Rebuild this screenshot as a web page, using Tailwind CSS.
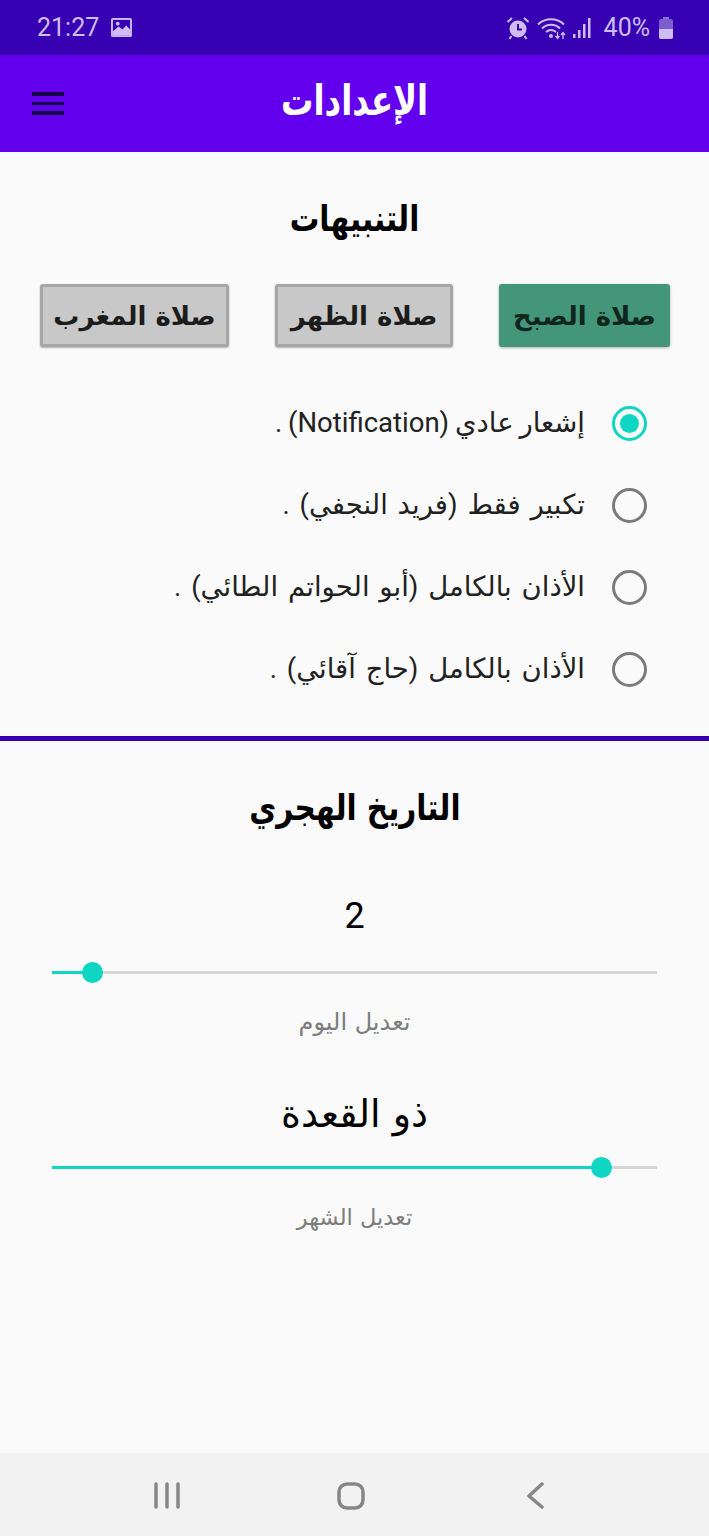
<!DOCTYPE html>
<html lang="ar">
<head>
<meta charset="utf-8">
<script src="https://cdn.jsdelivr.net/npm/@tailwindcss/browser@4"></script>
<title>الإعدادات</title>
</head>
<body class="m-0 bg-[#fafafa]">
<div class="w-[709px] h-[1536px] flex flex-col overflow-hidden bg-[#fafafa] font-['DejaVu_Sans',sans-serif]">

  <!-- Status bar -->
  <div class="h-[55px] shrink-0 bg-[#3700b3] flex items-center justify-between pl-[37px] pr-[36px] text-[#cdbdf0]">
    <div class="flex items-center gap-[12px]">
      <span class="font-['Roboto',sans-serif] text-[25px] leading-none">21:27</span>
      <svg width="21" height="20" viewBox="0 0 22 21"><rect width="22" height="20" y="0" rx="2" fill="#cdbdf0"/><rect x="2" y="2" width="18" height="16" fill="#3700b3"/><path d="M2 18 L2 14 L8 9 L12 12 L16 8 L20 12 L20 18 Z" fill="#cdbdf0"/><circle cx="7" cy="6" r="2" fill="#cdbdf0"/></svg>
    </div>
    <div class="flex items-center">
      <svg width="24" height="24" viewBox="0 0 24 24" fill="none" class="mr-[7px]"><circle cx="12" cy="13" r="8.5" fill="#cdbdf0"/><path d="M12 8v5.5h4" stroke="#3700b3" stroke-width="2"/><path d="M1.500 6 L6 2 M22.500 6 L18 2 M5.500 20 L3.500 23 M18.500 20 L20.500 23" stroke="#cdbdf0" stroke-width="2"/></svg>
      <svg width="30" height="24" viewBox="0 0 30 24" fill="none" class="mr-[5px]"><path d="M1 8.500 C8 1.500 20 1.500 27 8.500 M5 12.500 C10 7.500 18 7.500 23 12.500 M9 16 C12 13.500 16 13.500 19 16" stroke="#cdbdf0" stroke-width="2"/><circle cx="14" cy="20" r="2" fill="#cdbdf0"/><path d="M20.500 16v6M18.500 20l2 2.500 2-2.500M26 23v-6M24 19l2-2.500 2 2.500" stroke="#cdbdf0" stroke-width="1.300"/></svg>
      <svg width="20" height="22" viewBox="0 0 20 22" class="mr-[12px]"><rect x="1" y="17" width="2.500" height="4" fill="#cdbdf0"/><rect x="6" y="13" width="2.500" height="8" fill="#cdbdf0"/><rect x="11" y="7" width="2.500" height="14" fill="#cdbdf0"/><rect x="16" y="1" width="2.500" height="20" fill="#cdbdf0"/></svg>
      <span class="font-['Roboto',sans-serif] text-[25px] leading-none mr-[9px]">40%</span>
      <svg width="14" height="22" viewBox="0 0 14 22"><rect x="4" y="0" width="6" height="3" fill="#8a6fd8"/><rect x="0" y="2" width="14" height="20" rx="2" fill="#7c5ed0"/><path d="M0 12h14v8a2 2 0 0 1-2 2H2a2 2 0 0 1-2-2z" fill="#cdbdf0"/></svg>
    </div>
  </div>

  <!-- App bar -->
  <header class="relative h-[97px] shrink-0 bg-[#6200ee] flex items-center justify-center pb-[6px]">
    <h1 dir="rtl" class="m-0 text-white text-[42px] leading-none font-bold scale-x-[0.77]">الإعدادات</h1>
    <div class="absolute left-[32px] top-[37px] w-[32px] flex flex-col gap-[6px]">
      <span class="block h-[3.5px] bg-[#16004a]"></span>
      <span class="block h-[3.5px] bg-[#16004a]"></span>
      <span class="block h-[3.5px] bg-[#16004a]"></span>
    </div>
  </header>

  <main class="flex-1 flex flex-col min-h-0">
    <!-- Alerts section -->
    <section dir="rtl" class="h-[584px] shrink-0 flex flex-col items-stretch">
      <h2 class="m-0 mt-[46px] h-[42px] text-center text-[36px] leading-[42px] font-bold text-black scale-x-[0.82]">التنبيهات</h2>

      <div class="mt-[44px] flex justify-between pr-[39px] pl-[40px]">
        <button class="w-[171px] h-[63px] rounded-[3px] bg-[#43967a] shadow-[0_1px_3px_rgba(0,0,0,0.3)] text-[#10251d] text-[26px] font-bold leading-none">صلاة الصبح</button>
        <button class="w-[178px] h-[63px] rounded-[3px] border-[3px] border-[#a6a6a6] bg-[#c8c8c8] shadow-[0_1px_2px_rgba(0,0,0,0.3)] text-[#1c1c1c] text-[26px] font-bold leading-none">صلاة الظهر</button>
        <button class="w-[189px] h-[63px] rounded-[3px] border-[3px] border-[#a6a6a6] bg-[#c8c8c8] shadow-[0_1px_2px_rgba(0,0,0,0.3)] text-[#1c1c1c] text-[26px] font-bold leading-none">صلاة المغرب</button>
      </div>

      <div class="mt-[35px] flex flex-col pr-[62px] text-[#212121] text-[27.5px] font-['Roboto','DejaVu_Sans',sans-serif]">
        <label class="h-[82px] flex items-center gap-[27px]">
          <span class="w-[35px] h-[35px] shrink-0 rounded-full border-[3.5px] border-[#0fd6c2] flex items-center justify-center"><span class="w-[19px] h-[19px] rounded-full bg-[#0fd6c2]"></span></span>
          <span class="[word-spacing:-1px]">إشعار عادي (Notification) .</span>
        </label>
        <label class="h-[82px] flex items-center gap-[27px]">
          <span class="w-[35px] h-[35px] shrink-0 rounded-full border-[3.5px] border-[#7b7b7b]"></span>
          <span class="[word-spacing:3px]">تكبير فقط (فريد النجفي) .</span>
        </label>
        <label class="h-[82px] flex items-center gap-[27px]">
          <span class="w-[35px] h-[35px] shrink-0 rounded-full border-[3.5px] border-[#7b7b7b]"></span>
          <span class="[word-spacing:3px]">الأذان بالكامل (أبو الحواتم الطائي) .</span>
        </label>
        <label class="h-[82px] flex items-center gap-[27px]">
          <span class="w-[35px] h-[35px] shrink-0 rounded-full border-[3.5px] border-[#7b7b7b]"></span>
          <span class="[word-spacing:3px]">الأذان بالكامل (حاج آقائي) .</span>
        </label>
      </div>
    </section>

    <!-- Section divider -->
    <div class="h-[5px] shrink-0 bg-[#3700b3]"></div>

    <!-- Hijri date section -->
    <section class="flex-1 flex flex-col items-center">
      <h2 dir="rtl" class="m-0 mt-[46px] h-[42px] text-center text-[36px] leading-[42px] font-bold text-black scale-x-[0.82]">التاريخ الهجري</h2>

      <div class="mt-[67px] h-[40px] text-[36px] leading-[40px] text-black font-['Roboto',sans-serif]">2</div>
      <div class="relative mt-[35px] w-[605px] h-[3px] bg-[#d6d6d6]">
        <div class="absolute left-0 top-0 h-[3px] w-[40px] bg-[#0fd6c2]"></div>
        <div class="absolute left-[30px] top-[-9px] w-[21px] h-[21px] rounded-full bg-[#0fd6c2]"></div>
      </div>
      <div dir="rtl" class="mt-[33px] h-[30px] text-[24px] leading-[30px] text-[#7d7d7d]">تعديل اليوم</div>

      <div dir="rtl" class="mt-[56px] h-[42px] text-[38px] leading-[42px] text-black">ذو القعدة</div>
      <div class="relative mt-[31px] w-[605px] h-[3px] bg-[#d6d6d6]">
        <div class="absolute left-0 top-0 h-[3px] w-[550px] bg-[#0fd6c2]"></div>
        <div class="absolute left-[539px] top-[-9px] w-[21px] h-[21px] rounded-full bg-[#0fd6c2]"></div>
      </div>
      <div dir="rtl" class="mt-[33px] h-[30px] text-[22.5px] leading-[30px] text-[#7d7d7d]">تعديل الشهر</div>
    </section>
  </main>

  <!-- Navigation bar -->
  <nav class="h-[83px] shrink-0 bg-[#f2f2f2] relative">
    <svg class="absolute left-[153px] top-[29px]" width="28" height="28" viewBox="0 0 28 28" fill="none" stroke="#868686" stroke-width="3.500" stroke-linecap="round"><path d="M3 2v23M14 2v23M25 2v23"/></svg>
    <svg class="absolute left-[336px] top-[28px]" width="30" height="30" viewBox="0 0 30 30" fill="none" stroke="#868686" stroke-width="3.500"><rect x="3" y="3" width="24" height="24" rx="8"/></svg>
    <svg class="absolute left-[526px] top-[29px]" width="20" height="28" viewBox="0 0 20 28" fill="none" stroke="#868686" stroke-width="3.500" stroke-linecap="round" stroke-linejoin="round"><path d="M16 2 L3 14 L16 25"/></svg>
  </nav>
</div>
</body>
</html>
